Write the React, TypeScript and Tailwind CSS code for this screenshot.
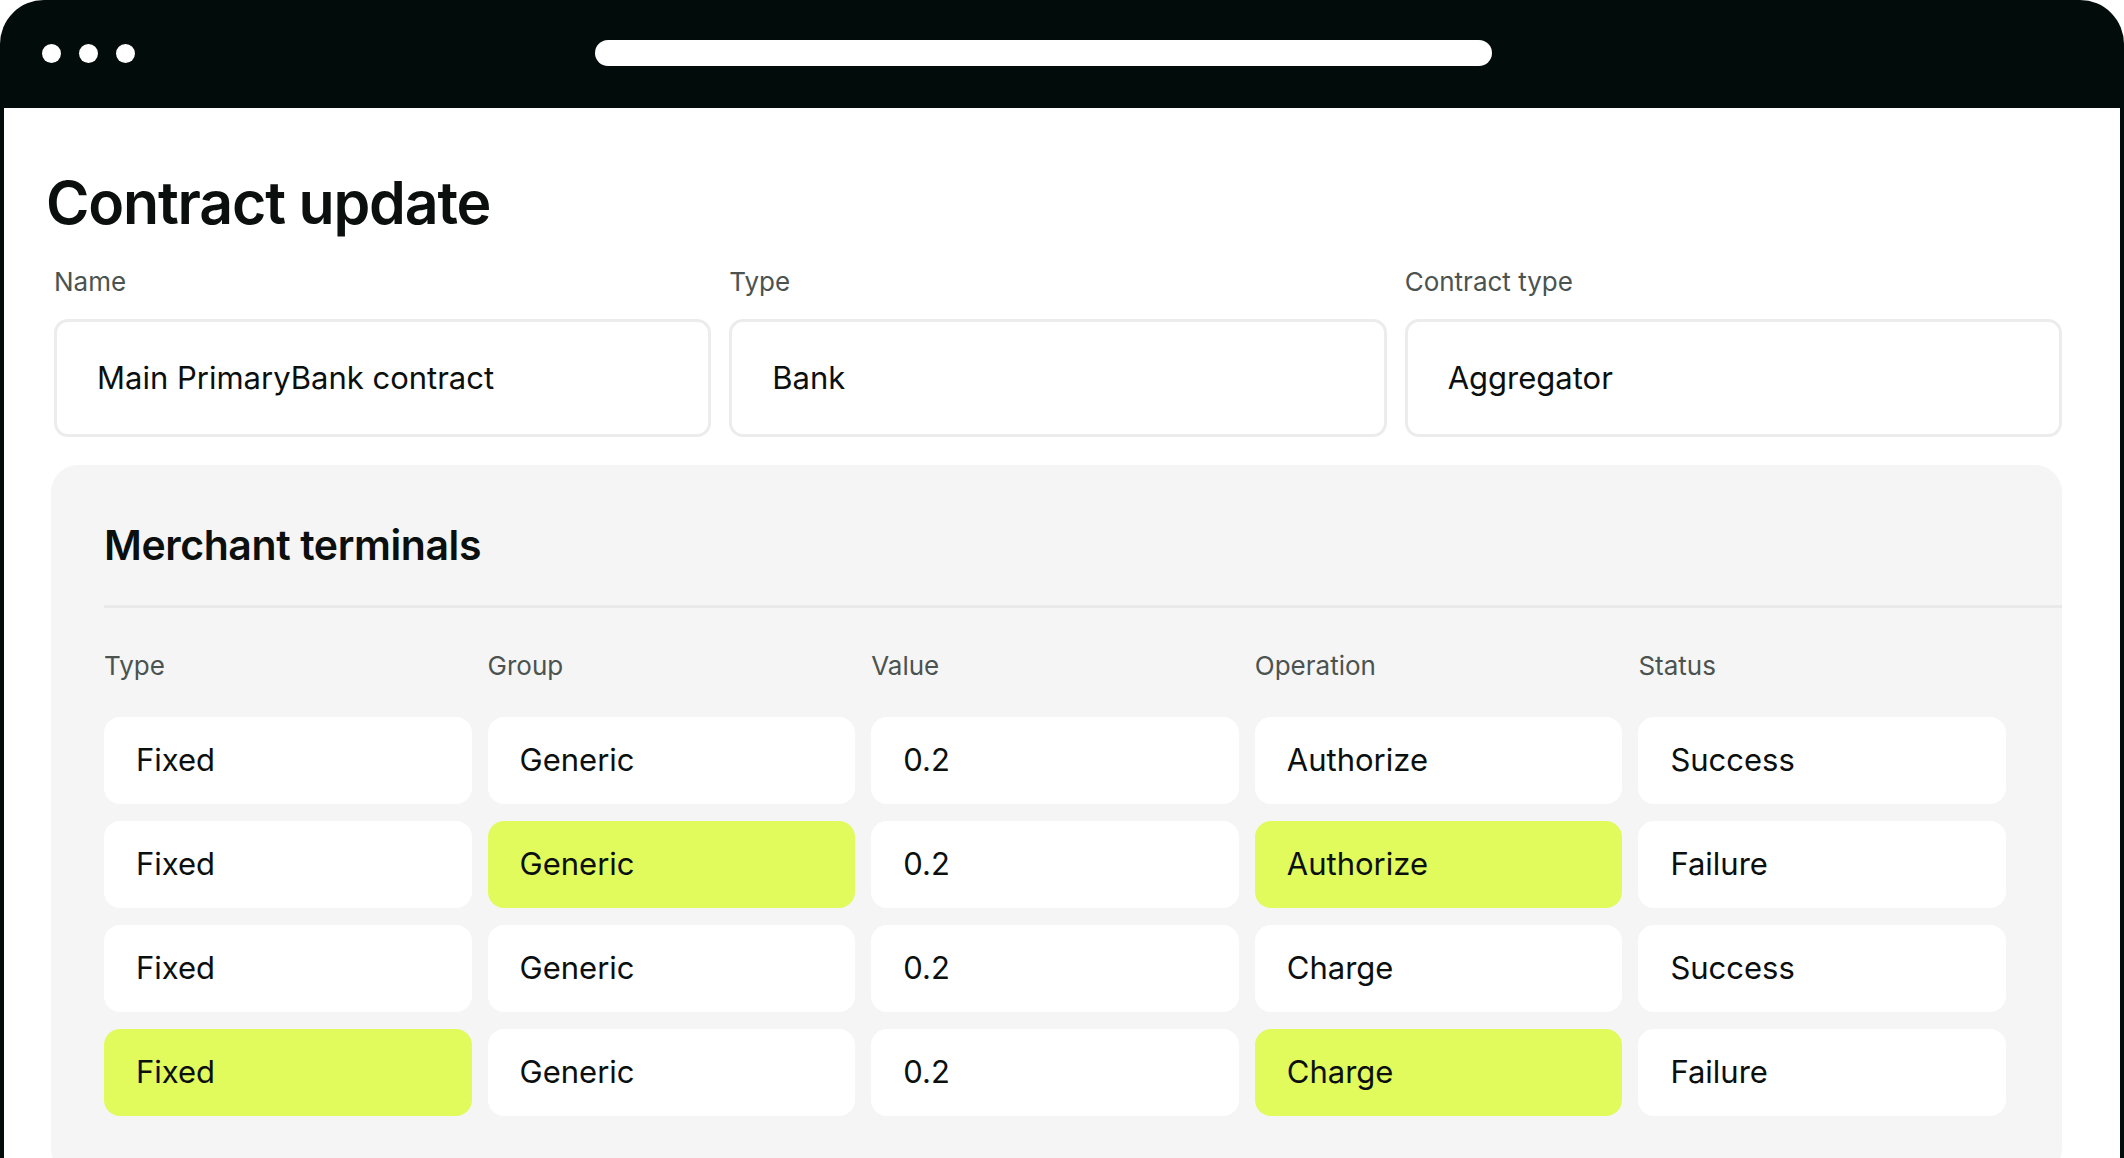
const fields = [
  { label: "Name", value: "Main PrimaryBank contract" },
  { label: "Type", value: "Bank" },
  { label: "Contract type", value: "Aggregator" },
];

const headers = ["Type", "Group", "Value", "Operation", "Status"];

const rows: { text: string; hi?: boolean }[][] = [
  [{ text: "Fixed" }, { text: "Generic" }, { text: "0.2" }, { text: "Authorize" }, { text: "Success" }],
  [{ text: "Fixed" }, { text: "Generic", hi: true }, { text: "0.2" }, { text: "Authorize", hi: true }, { text: "Failure" }],
  [{ text: "Fixed" }, { text: "Generic" }, { text: "0.2" }, { text: "Charge" }, { text: "Success" }],
  [{ text: "Fixed", hi: true }, { text: "Generic" }, { text: "0.2" }, { text: "Charge", hi: true }, { text: "Failure" }],
];

export default function App() {
  return (
    <div className="w-[2124px] h-[1158px] overflow-hidden bg-white text-[#0b0f0e]" style={{ fontFamily: "Inter, 'Noto Sans', sans-serif" }}>
      <div className="h-[1200px] rounded-t-[44px] bg-[#020c0a] px-[4px] flex flex-col">
        <div className="h-[108px] shrink-0 flex items-center px-[38px]">
          <div className="flex gap-[18px] pb-[2px]">
            <span className="w-[19px] h-[19px] rounded-full bg-white" />
            <span className="w-[19px] h-[19px] rounded-full bg-white" />
            <span className="w-[19px] h-[19px] rounded-full bg-white" />
          </div>
          <div className="ml-[460px] w-[897px] h-[26px] rounded-full bg-white mb-[2px]" />
        </div>
        <div className="flex-1 bg-white pl-[38px] pr-[58px]">
          <h1 className="mt-[60px] text-[59px] leading-[70px] font-semibold tracking-[-0.02em] ml-[4px]">Contract update</h1>
          <div className="mt-[28px] grid grid-cols-3 gap-[18px] pl-[12px]">
            {fields.map((f) => (
              <div key={f.label}>
                <div className="text-[26px] leading-[32px] text-[#4b5350]">{f.label}</div>
                <div className="mt-[21px] h-[118px] rounded-[14px] border-[3px] border-[#ececec] flex items-center px-[40px] text-[31px]">
                  {f.value}
                </div>
              </div>
            ))}
          </div>
          <div className="mt-[28px] ml-[9px] rounded-[27px] bg-[#f5f5f5] pt-[54px] pb-[60px]">
            <h2 className="pl-[53px] text-[41px] leading-[52px] font-semibold tracking-[-0.01em]">Merchant terminals</h2>
            <div className="ml-[53px] mt-[34px] h-[3px] bg-[#e9e9e9]" />
            <div className="px-[53px] pr-[56px]">
              <div className="mt-[42px] grid grid-cols-5 gap-x-[16px] text-[26px] leading-[32px] text-[#4b5350]">
                {headers.map((h) => (
                  <div key={h}>{h}</div>
                ))}
              </div>
              <div className="mt-[35px] flex flex-col gap-[17px]">
                {rows.map((r, i) => (
                  <div key={i} className="grid grid-cols-5 gap-x-[16px]">
                    {r.map((c, j) => (
                      <div
                        key={j}
                        className={`h-[87px] rounded-[16px] flex items-center px-[32px] text-[31px] ${c.hi ? "bg-[#e1fa5c]" : "bg-white"}`}
                      >
                        {c.text}
                      </div>
                    ))}
                  </div>
                ))}
              </div>
            </div>
          </div>
        </div>
      </div>
    </div>
  );
}
